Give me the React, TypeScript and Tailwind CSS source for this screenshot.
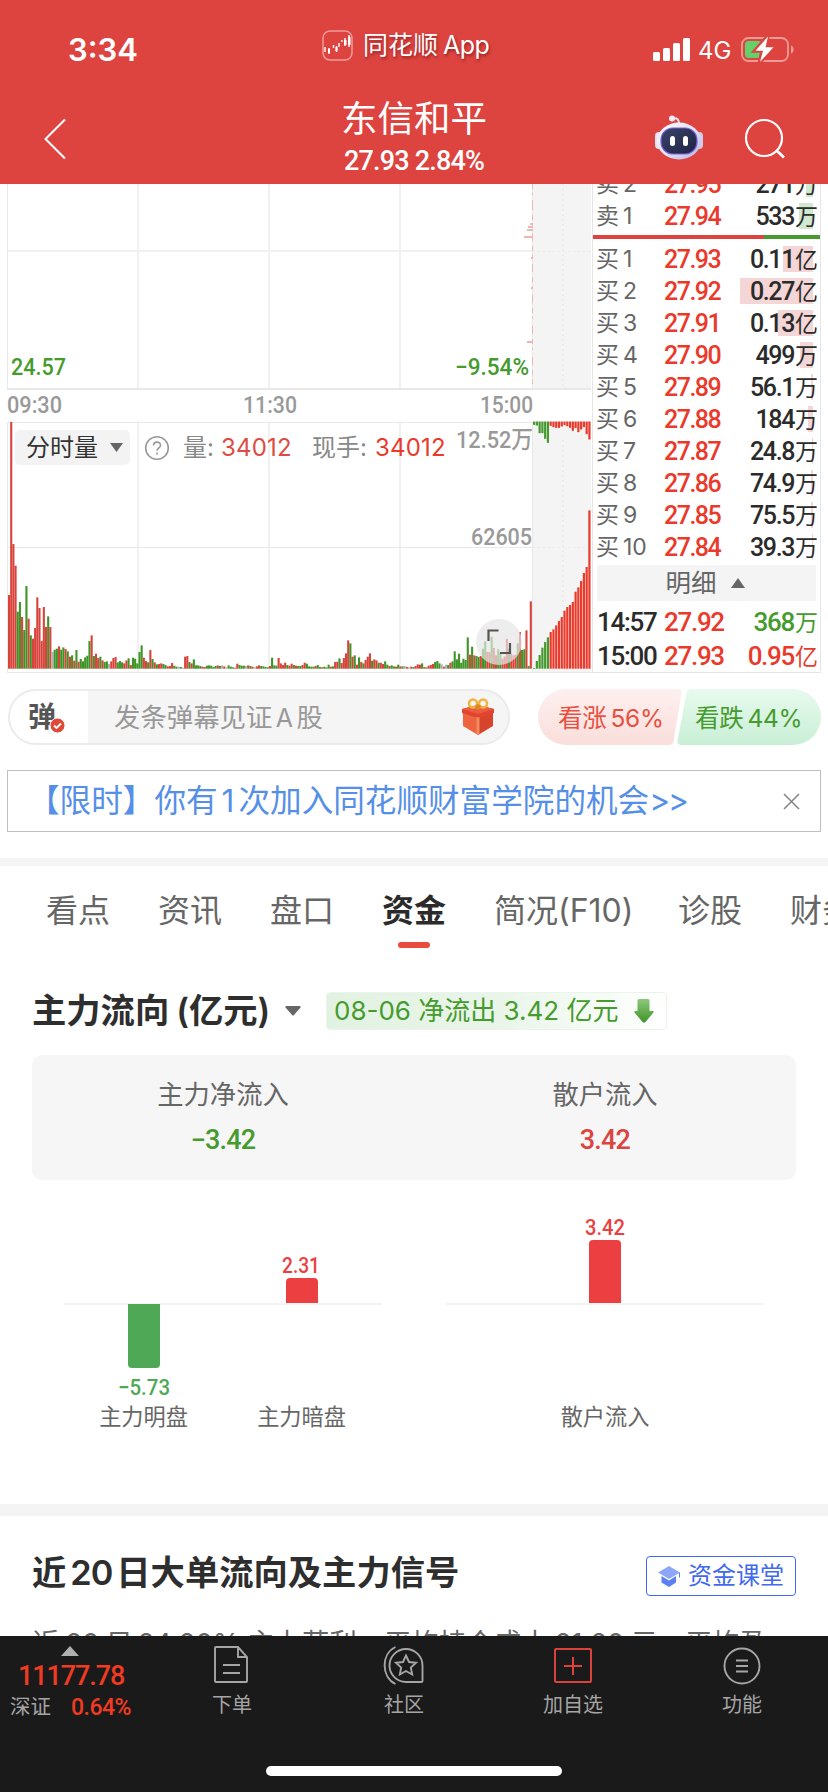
import React from 'react';

const SANS = "[font-family:Inter,'Noto_Sans_CJK_SC',sans-serif]";
const NUM = "[font-family:Roboto,'Noto_Sans_CJK_SC',sans-serif]";

const RED = '#d8443c';
const GREEN = '#3f9428';
const GRAY = '#b0b0b0';

type Level = { label: string; no: string; price: string; amount: string; bar: number };

const asks: Level[] = [
  { label: '卖', no: '2', price: '27.95', amount: '271万', bar: 7 },
  { label: '卖', no: '1', price: '27.94', amount: '533万', bar: 14 },
];

const bids: Level[] = [
  { label: '买', no: '1', price: '27.93', amount: '0.11亿', bar: 30 },
  { label: '买', no: '2', price: '27.92', amount: '0.27亿', bar: 73 },
  { label: '买', no: '3', price: '27.91', amount: '0.13亿', bar: 35 },
  { label: '买', no: '4', price: '27.90', amount: '499万', bar: 13 },
  { label: '买', no: '5', price: '27.89', amount: '56.1万', bar: 2 },
  { label: '买', no: '6', price: '27.88', amount: '184万', bar: 5 },
  { label: '买', no: '7', price: '27.87', amount: '24.8万', bar: 1 },
  { label: '买', no: '8', price: '27.86', amount: '74.9万', bar: 2 },
  { label: '买', no: '9', price: '27.85', amount: '75.5万', bar: 2 },
  { label: '买', no: '10', price: '27.84', amount: '39.3万', bar: 1 },
];

// 分时成交量: 高度 + 颜色 (r 涨 / g 跌 / x 平)
const volume = `221r 740r 374r 309r 171g 200g 155r 116g 248g 150r 100g 90r 122r 214r 182r 83r 185r 125r 157g 125r
51x 57g 60g 67r 57g 64g 59r 52g 36r 40g 24r 56g 21r 29g 22g 34g 39g 83g 100r 38g
45r 32r 36g 25r 20g 22g 14x 22r 32r 35r 19g 23g 19g 16r 25r 31g 11r 33g 30g 16g
50g 70g 33r 23r 19g 56r 29g 19r 13g 14r 16r 14g 11g 7r 8r 17r 9g 6g 6x 5g
3x 36r 38r 20g 16r 28g 10g 10g 8g 6r 5r 9g 10g 9g 5g 8g 10r 8g 10x 7r
4x 10g 6g 4g 3r 15r 11g 9g 9g 8x 10r 8g 6r 4x 7r 10r 8g 7g 5g 4g
8r 33g 10g 9g 32r 16r 11r 18r 11g 9r 15r 11g 9r 8g 8g 11r 18r 15g 7g 6g
6g 8r 11g 5g 4r 6g 4g 12g 6r 7g 20r 21r 31g 17r 32r 46r 85r 76g 36r 40g
12r 34g 20r 16g 26r 36r 46r 24g 28r 25r 18g 18r 14r 22g 12g 8r 10g 7g 6r 12g
7r 7g 8x 5r 4x 6r 5g 8r 13r 12r 16g 5r 4g 9r 11r 14r 20g 23g 16g 13x
6r 12x 11g 18r 22g 52g 28g 45g 18g 30g 26g 94g 42r 66g 40r 38g 35g 38r 60g 82g
50r 50r 96g 62r 40r 58g 50g 30r 36r 90r 60g 45r 40r 42r 76g 110r 56g 58g 115r 8g 202r`
  .trim()
  .split(/\s+/)
  .map((s) => ({ h: parseInt(s, 10) / 3, c: s.endsWith('r') ? RED : s.endsWith('g') ? GREEN : GRAY }));

// 集合竞价
const auctionUp = [2, 23, 41, 63, 80, 94, 110, 118, 130, 143, 155, 174, 185, 191, 200, 231, 244, 263, 287, 305, 475];
const auctionDown = [10, 12, 35, 35, 52, 64, 13, 17, 19, 19, 15, 11, 14, 19, 28, 20, 32, 24, 17, 38, 54];

const ticks = [
  [200, 1], [223, 3], [226, 5], [229, 6], [235.5, 9], [256.5, 2.5], [287, 2], [340.5, 6], [382, 1],
];

const StatusBar = () => (
  <div className={`flex h-[92px] ${SANS} text-white`}>
    <div className="w-[322px] pl-[68px] pt-[34px] text-[31px] font-semibold leading-8">3:34</div>
    <div className="flex h-[30px] w-[331px] items-center mt-[30px]">
      <svg width="31" height="31" viewBox="0 0 31 31" fill="none">
        <rect x="1" y="1" width="29" height="29" rx="7" stroke="#ee9a96" strokeWidth="1.5" />
        <path d="M3 17v5M7 18v6M11.5 15v3M14.5 16v6M17 13v4M20 12v-2M23 8v8M27 5v12" stroke="#fff" strokeWidth="1.4" />
        <path d="M6 19h2v4H6zM13.5 17h2v4h-2zM22 10h2.5v5H22zM26 7h2.5v8H26z" fill="#fff" />
      </svg>
      <span className="ml-[10px] text-[25px] leading-none [text-shadow:1px_2px_3px_rgba(80,0,0,0.5)]">
        同花顺<span className="ml-[5px] text-[25px] tracking-[-0.5px]">App</span>
      </span>
    </div>
    <svg className="mt-[34px]" width="40" height="30" fill="#fff">
      <rect x="0" y="18" width="7" height="9" rx="1.5" />
      <rect x="10" y="14" width="7" height="13" rx="1.5" />
      <rect x="20" y="9" width="7" height="18" rx="1.5" />
      <rect x="30" y="4" width="7" height="23" rx="1.5" />
    </svg>
    <div className="mt-[39px] ml-[5px] w-[43px] text-[24px] leading-6">4G</div>
    <svg className="mt-[34px]" width="56" height="32" viewBox="0 0 56 32" fill="none">
      <rect x="1" y="4" width="46" height="23" rx="6.5" stroke="#ee9a96" strokeWidth="1.8" />
      <path d="M50 11.500c3.500 1 3.500 7 0 8z" fill="#ee9a96" />
      <rect x="4" y="7" width="17" height="17" rx="3.500" fill="#65cf6b" />
      <path d="M27 2 13.500 17h7.500l-2.500 11.500L33 13h-8.500z" fill="#fff" stroke="#dd4440" strokeWidth="3.500" />
      <path d="M27 2.500 14.500 16.800h7.500L19 28 32.500 13.200h-8z" fill="#fff" />
    </svg>
  </div>
);

const Robot = () => (
  <svg width="50" height="48" viewBox="0 0 50 48">
    <defs>
      <linearGradient id="shell" x1="0" y1="0" x2="1" y2="1">
        <stop offset="0" stopColor="#ffffff" />
        <stop offset="0.6" stopColor="#dcdcf0" />
        <stop offset="1" stopColor="#b4b2dc" />
      </linearGradient>
      <linearGradient id="visor" x1="0" y1="0" x2="1" y2="1">
        <stop offset="0" stopColor="#3a4468" />
        <stop offset="1" stopColor="#1d2344" />
      </linearGradient>
    </defs>
    <path d="M19 4.500c4-1 6 1 6 5" fill="none" stroke="#e4e2f2" strokeWidth="2" />
    <circle cx="18" cy="4.500" r="3" fill="#efeef8" />
    <rect x="1" y="18" width="8" height="17" rx="4" fill="#e4e2f4" />
    <rect x="41" y="18" width="8" height="17" rx="4" fill="#cfcdea" />
    <ellipse cx="25" cy="27" rx="22" ry="18.500" fill="url(#shell)" />
    <rect x="7" y="14" width="36" height="26" rx="12" fill="url(#visor)" stroke="#7a5fe0" strokeWidth="1.200" />
    <rect x="16" y="22" width="5" height="10" rx="2.500" fill="#fff" />
    <rect x="29" y="22" width="5" height="10" rx="2.500" fill="#fff" />
  </svg>
);

const Header = () => (
  <header className="h-[184px] shrink-0 bg-[#dd4440] text-white">
    <StatusBar />
    <div className="flex h-[92px]">
      <div className="w-[300px] pt-[26px] pl-[43px]">
        <svg width="26" height="42" viewBox="0 0 26 42" fill="none" stroke="#fff" strokeWidth="2">
          <path d="M22 1.500 2.500 21 22 40.500" />
        </svg>
      </div>
      <div className="flex w-[228px] flex-col items-center">
        <div className={`${SANS} mt-[9px] text-[36.5px] leading-[36px]`}>东信和平</div>
        <div className={`${NUM} mt-[10px] text-[27px] font-medium leading-[28px] tracking-[-0.8px]`}>27.93 2.84%</div>
      </div>
      <div className="flex pl-[126px] pt-[22px]">
        <Robot />
        <svg className="ml-[40px]" width="44" height="46" viewBox="0 0 44 46" fill="none" stroke="#fff" strokeWidth="2.200">
          <circle cx="20" cy="24" r="18" />
          <path d="m32 36 8 7.500" strokeWidth="2.800" />
        </svg>
      </div>
    </div>
  </header>
);

const AxisText = ({ x, y, w, fill, children, size = 24, weight = 500 }: any) => (
  <text x={x} y={y} textLength={w} lengthAdjust="spacingAndGlyphs" fill={fill} fontSize={size} fontWeight={weight}
    fontFamily="Roboto, 'Noto Sans CJK SC', sans-serif">
    {children}
  </text>
);

const TimeChart = () => (
  <div className="relative h-[489px] w-[592px]">
    <svg width="592" height="489" viewBox="0 184 592 489" shapeRendering="crispEdges">
      <rect x="533" y="184" width="58" height="204" fill="#f4f4f4" />
      <rect x="533" y="422" width="58" height="250" fill="#f4f4f4" />
      <g fill="#f1f1f1">
        {[137, 268, 399].map((x) => (
          <React.Fragment key={x}>
            <rect x={x} y="184" width="2" height="205" />
            <rect x={x} y="423" width="2" height="249" />
          </React.Fragment>
        ))}
        <rect x="7" y="250" width="525" height="2" />
      </g>
      <g fill="#e8e8e8">
        <rect x="7" y="184" width="1" height="206" />
        <rect x="7" y="422" width="1" height="250" />
        <rect x="7" y="388" width="584" height="2" />
        <rect x="7" y="422" width="584" height="1" />
        <rect x="7" y="547" width="525" height="1" />
        <rect x="532" y="184" width="1" height="205" />
        <rect x="532" y="422" width="1" height="250" />
        <rect x="7" y="672" width="585" height="1" />
      </g>
      <g stroke="#ececec" strokeWidth="1.500" strokeDasharray="2 3">
        <path d="M563 184v204M533 251.500h58M563 440v230M533 547.500h58" />
      </g>
      <path d="M532.500 184v204" stroke="#f0b6b4" strokeDasharray="5 4 2 7 8 5" />
      {ticks.map(([y, w]) => (
        <rect key={y} x={533 - w} y={y} width={w} height="2" fill="#f1b5b3" />
      ))}
      <g shapeRendering="auto">
        {volume.map((v, i) => (
          <rect key={i} x={8 + i * 2.174} y={668.7 - v.h} width="2.100" height={v.h} fill={v.c} />
        ))}
        {auctionUp.map((h, i) => (
          <g key={i} fill={i < 6 ? '#45992f' : '#ea3a2c'}>
            <rect x={533 + i * 2.766} y={668.7 - h / 3} width="2.200" height={h / 3} />
            <rect x={533 + i * 2.766} y="421.500" width="2.200" height={auctionDown[i] / 3} />
          </g>
        ))}
      </g>
      <AxisText x="11" y="375" w="55" fill="#459b2d">24.57</AxisText>
      <AxisText x="455" y="375" w="74" fill="#459b2d">−9.54%</AxisText>
      <AxisText x="7" y="413" w="55" fill="#999">09:30</AxisText>
      <AxisText x="243" y="413" w="54" fill="#999">11:30</AxisText>
      <AxisText x="480" y="413" w="53" fill="#999">15:00</AxisText>
      <AxisText x="456" y="448" w="77" fill="#999">12.52万</AxisText>
      <AxisText x="471" y="545" w="61" fill="#999">62605</AxisText>
      <g shapeRendering="auto">
        <circle cx="499" cy="642" r="23" fill="#e6e6e6" fillOpacity="0.700" />
        <path d="M488.500 641v-10.500h10M510 643v10h-10" fill="none" stroke="#555" strokeWidth="2.200" />
      </g>
    </svg>
    <div className={`absolute left-[15px] top-[246px] flex items-center ${SANS} text-[24px] leading-none text-[#888]`}>
      <div className="flex h-[35px] w-[115px] items-center rounded-[5px] bg-[#f3f3f3] pl-[11px] text-[#333]">
        分时量
        <svg className="ml-[12px]" width="13" height="9"><path d="M0 0h13L6.500 9z" fill="#666" /></svg>
      </div>
      <svg className="ml-[14px]" width="26" height="26" viewBox="0 0 26 26" fill="none" stroke="#999" strokeWidth="1.600">
        <circle cx="13" cy="13" r="11.300" />
        <path d="M9.500 10.500c0-4.500 7-4.500 7-.3 0 2.700-3.500 2.500-3.500 5.600M13 17.500v2" />
      </svg>
      <span className="ml-[13px] w-[38px] whitespace-nowrap">量:</span>
      <span className="w-[91px] tracking-[0.2px] text-[#dd4b44]">34012</span>
      <span className="w-[63px] whitespace-nowrap">现手:</span>
      <span className="tracking-[0.2px] text-[#ea3a2c]">34012</span>
    </div>
  </div>
);

const LevelRow = ({ row, ask }: { row: Level; ask?: boolean }) => (
  <div className="relative flex h-8 items-center pl-[3px] leading-none">
    <span className={`absolute right-[7px] top-[3px] h-[26px] ${ask ? 'bg-[#cfe8cf]' : 'bg-[#f5d6d6]'}`} style={{ width: row.bar }} />
    <span className={`${SANS} flex w-[68px] text-[23px] text-[#666]`}>
      {row.label}
      <span className="ml-[4px] text-[23px]">{row.no}</span>
    </span>
    <span className={`${NUM} text-[25px] font-medium tracking-[-1.5px] text-[#ea3a2c]`}>{row.price}</span>
    <span className={`${NUM} relative ml-auto mr-[2px] text-[25px] font-medium tracking-[-1.400px] text-[#2b2b2b]`}>
      {row.amount.slice(0, -1)}
      <span className="ml-px text-[23px] font-normal tracking-normal">{row.amount.slice(-1)}</span>
    </span>
  </div>
);

const OrderBook = () => (
  <div className="h-[489px] w-[229px] overflow-hidden border-r border-b border-l border-[#e5e5e5]">
    <div className="-mt-4">
      {asks.map((r) => <LevelRow key={r.no} row={r} ask />)}
    </div>
    <div className="mt-[3px] mb-1 flex h-1">
      <div className="w-[171px] bg-[#dd4440]" />
      <div className="flex-1 bg-[#459b2d]" />
    </div>
    {bids.map((r) => <LevelRow key={r.no} row={r} />)}
    <div className={`${SANS} mx-1 mt-[2px] flex h-9 items-center justify-center bg-[#f4f4f4] text-[25.5px] leading-none text-[#666]`}>
      明细
      <svg className="ml-[14px] mr-[3px]" width="14" height="10"><path d="M0 10h14L7 0z" fill="#666" /></svg>
    </div>
    {[
      { time: '14:57', price: '27.92', n: '368', u: '万', c: 'text-[#459b2d]' },
      { time: '15:00', price: '27.93', n: '0.95', u: '亿', c: 'text-[#ea3a2c]' },
    ].map((t, i) => (
      <div key={i} className={`${NUM} flex h-[34px] items-center pl-[4px] text-[26px] font-medium leading-none tracking-[-1.300px] ${i === 0 ? 'mt-[4px]' : ''}`}>
        <span className="w-[67px] text-[#2b2b2b]">{t.time}</span>
        <span className="text-[#ea3a2c]">{t.price}</span>
        <span className={`ml-auto mr-[2px] ${t.c}`}>
          {t.n}<span className="ml-px text-[23px] font-normal tracking-normal">{t.u}</span>
        </span>
      </div>
    ))}
  </div>
);

const Gift = () => (
  <svg width="34" height="38" viewBox="0 0 34 38">
    <path d="M2 12v16l15 9V16z" fill="#ee6440" />
    <path d="M32 12v16L17 37V16z" fill="#d8432c" />
    <path d="M1 11 17 7l16 4v4l-16 5L1 15z" fill="#e2452f" />
    <path d="M1 11 17 7l16 4-16 5z" fill="#ea5c40" />
    <path d="m15.500 19 1.500.5 1.500-.5v17l-1.500 1-1.500-1z" fill="#f08b5a" />
    <g fill="none" stroke="#f2b23e" strokeWidth="2.500">
      <circle cx="12" cy="5.500" r="4" />
      <circle cx="22" cy="5.500" r="4" />
    </g>
    <circle cx="17" cy="9" r="2.800" fill="#d98a28" />
  </svg>
);

const DanmakuBar = () => (
  <div className={`${SANS} mt-[16px] flex h-14 pl-2 leading-none`}>
    <div className="flex h-14 w-[502px] items-center overflow-hidden rounded-full border-2 border-[#ebebeb] bg-[#f5f5f5]">
      <div className="relative flex h-full w-[78px] items-center bg-white pl-[18px] text-[28px] font-bold text-[#555]">
        弹
        <svg className="absolute left-[39px] top-[26px]" width="17" height="17" viewBox="0 0 17 17">
          <circle cx="8.500" cy="8.500" r="7.500" fill="#e04a38" stroke="#fff" strokeWidth="1" />
          <path d="m5 8.500 2.500 2.500L12 6.500" fill="none" stroke="#fff" strokeWidth="1.800" />
        </svg>
      </div>
      <span className="ml-[26px] text-[26.400px] text-[#999]">发条弹幕见证<span className="mx-[3.500px] text-[25px]">A</span>股</span>
      <div className="mr-[13px] ml-auto"><Gift /></div>
    </div>
    <div className="relative ml-[28px] h-14 w-[283px]">
      <svg width="283" height="56" viewBox="0 0 283 56">
        <defs>
          <linearGradient id="bull" x1="0" y1="0" x2="0" y2="1">
            <stop offset="0" stopColor="#fdf0ef" />
            <stop offset="1" stopColor="#fadedb" />
          </linearGradient>
          <linearGradient id="bear" x1="0" y1="0" x2="0" y2="1">
            <stop offset="0" stopColor="#e8faee" />
            <stop offset="1" stopColor="#c8efd5" />
          </linearGradient>
        </defs>
        <path d="M28 0h112q4 0 3.500 4l-8 48q-.5 4-4.500 4H28a28 28 0 0 1 0-56z" fill="url(#bull)" />
        <path d="M255 0H153q-4 0-4.500 4l-9 48q-.5 4 3.500 4h112a28 28 0 0 0 0-56z" fill="url(#bear)" />
      </svg>
      <div className="absolute inset-0 flex items-center pt-[2px] text-[24.500px] tracking-[-0.3px]">
        <span className="w-[137px] pl-[20px] text-[#e8503f]">看涨<span className="ml-[4px]">56%</span></span>
        <span className="pl-[20px] text-[#459b2d]">看跌<span className="ml-[4px]">44%</span></span>
      </div>
    </div>
  </div>
);

const Banner = () => (
  <div className={`${SANS} mx-[7px] mt-[25px] flex h-[62px] items-center border-[1.5px] border-[#bfbfbf] leading-none`}>
    <span className="ml-[20px] whitespace-nowrap text-[31.6px] text-[#568fe8]">
      【限时】你有<span className="mx-[4px]">1</span>次加入同花顺财富学院的机会<span className="tracking-[-2px]">&gt;&gt;</span>
    </span>
    <svg className="mr-[20px] ml-auto" width="17" height="17" fill="none" stroke="#888" strokeWidth="1.600">
      <path d="m1 1 15 15M16 1 1 16" />
    </svg>
  </div>
);

const tabs = [
  { name: '看点', w: 'w-[112px]' },
  { name: '资讯', w: 'w-[112px]' },
  { name: '盘口', w: 'w-[112px]' },
  { name: '资金', w: 'w-[112px]', active: true },
  { name: '简况(F10)', w: 'w-[184px]' },
  { name: '诊股', w: 'w-[112px]' },
  { name: '财务', w: 'w-[112px]' },
];

const Tabs = () => (
  <nav className={`${SANS} flex h-[104px] overflow-hidden pl-[46px] text-[32px] leading-none text-[#666]`}>
    {tabs.map((t) => (
      <div key={t.name} className={`${t.w} shrink-0 pt-[29px]`}>
        <div className={t.active ? 'inline-flex flex-col items-center font-bold text-[#2b2b2b]' : 'inline-block'}>
          {t.name}
          {t.active && <span className="mt-[15px] h-[6px] w-8 rounded-full bg-[#e84c3d]" />}
        </div>
      </div>
    ))}
  </nav>
);

const FundFlow = () => (
  <section className={`${SANS} h-[534px] overflow-hidden px-8 pt-[22px] leading-none`}>
    <div className="flex h-[38px] items-center">
      <h2 className="w-[238px] whitespace-nowrap text-[34.300px] font-bold text-[#2e2e2e]">
        主力流向<span className="ml-[7px] font-semibold">(</span>亿元<span className="font-semibold">)</span>
      </h2>
      <svg className="ml-[15px]" width="16" height="10"><path d="M1 0h14q1 .5.500 1.500L8.500 9.500h-1L.5 1.500Q0 .5 1 0z" fill="#666" /></svg>
      <div className="ml-[25px] flex h-[38px] w-[341px] items-center whitespace-nowrap rounded-[4px] border border-[#eaf5ea] bg-linear-to-r from-[#e2f2e2] via-[#e9f5e9] to-white pl-[7px] text-[26px] text-[#459b2d]">
        <span className="text-[26px]">08-06 净流出 3.42 亿元</span>
        <svg className="mr-[12px] ml-auto" width="20" height="24" viewBox="0 0 20 24">
          <defs>
            <linearGradient id="down" x1="0" y1="0" x2="0" y2="1">
              <stop offset="0" stopColor="#8cc97c" />
              <stop offset="1" stopColor="#3f9428" />
            </linearGradient>
          </defs>
          <path d="M5 0h9q1.500 0 1.500 1.500V12H19q1 .5.500 1.500l-8.500 10h-2l-8.500-10Q0 12.500 1 12h2.500V1.500Q3.500 0 5 0z" fill="url(#down)" />
        </svg>
      </div>
    </div>
    <div className="mt-[25px] grid h-[125px] grid-cols-2 rounded-[10px] bg-[#f6f6f6] text-center">
      <div className="pt-[27px]">
        <div className="text-[26.300px]/[26px] text-[#666]">主力净流入</div>
        <div className={`${NUM} mt-[19px] text-[27px] font-medium tracking-[-0.8px] text-[#459b2d]`}>−3.42</div>
      </div>
      <div className="pt-[27px]">
        <div className="text-[26.300px]/[26px] text-[#666]">散户流入</div>
        <div className={`${NUM} mt-[19px] text-[27px] font-medium tracking-[-0.8px] text-[#dd4440]`}>3.42</div>
      </div>
    </div>
    <svg className="-mx-8 max-w-none" width="828" height="300" viewBox="0 1180 828 300">
      <rect x="64" y="1303" width="318" height="2" fill="#f3f3f3" />
      <rect x="446" y="1303" width="318" height="2" fill="#f3f3f3" />
      <path d="M128 1304h32v60q0 4-4 4h-24q-4 0-4-4z" fill="#4ea855" />
      <path d="M286 1303v-21q0-4 4-4h24q4 0 4 4v21z" fill="#ec3f42" />
      <path d="M589 1303v-59q0-4 4-4h24q4 0 4 4v59z" fill="#ec3f42" />
      <AxisText x="118" y="1395" w="52" size={22} fill="#4ea855">−5.73</AxisText>
      <AxisText x="282" y="1273" w="38" size={22} fill="#ec3f42">2.31</AxisText>
      <AxisText x="585" y="1235" w="40" size={22} fill="#ec3f42">3.42</AxisText>
      <g fontFamily="'Noto Sans CJK SC', sans-serif" fontSize="22.2" fill="#666" textAnchor="middle">
        <text x="143.500" y="1425">主力明盘</text>
        <text x="301.500" y="1425">主力暗盘</text>
        <text x="605" y="1425">散户流入</text>
      </g>
    </svg>
  </section>
);

const BigOrders = () => (
  <section className={`${SANS} h-[120px] overflow-hidden px-8 pt-10 leading-none`}>
    <div className="flex h-10 justify-between">
      <h2 className="whitespace-nowrap text-[34.300px]/[34px] font-bold text-[#2e2e2e]">
        近<span className="mx-[4px] font-semibold tracking-[-1px]">20</span>日大单流向及主力信号
      </h2>
      <button className="flex h-10 w-[150px] items-center rounded-[4px] border-[1.5px] border-[#4169f0] pl-[11px] text-[24px] text-[#4169f0]">
        <svg className="mr-[8px]" width="22" height="21" viewBox="0 0 22 21">
          <path d="M11 0 22 6.500 11 13 0 6.500z" fill="#8da6f7" />
          <path d="M3.500 10v6.500L11 21l7-4.500V10L11 14.500z" fill="#5c80f3" />
          <path d="M21.500 6.500v5" stroke="#5c80f3" />
        </svg>
        <span className="whitespace-nowrap">资金课堂</span>
      </button>
    </div>
    <p className="mt-[34px] whitespace-nowrap text-[27.400px] text-[#666]">
      近<span className="mx-[6px]">20</span>日<span className="ml-[5px]">24.20%</span> 主力获利，平均持仓成本<span className="mx-[6px]">21.20</span>元，平均盈
    </p>
  </section>
);

const NavItem = ({ label, className, children }: any) => (
  <div className={`flex w-[80px] flex-col items-center pt-[9px] ${className}`}>
    <svg width="44" height="42" viewBox="0 0 44 42" fill="none" stroke="#a5a5a5" strokeWidth="1.900">{children}</svg>
    <span className="mt-[7px] whitespace-nowrap text-[20px]/[22px]">{label}</span>
  </div>
);

const BottomNav = () => (
  <footer className={`${SANS} relative flex h-[156px] shrink-0 bg-[#1a1a1a] leading-none text-[#a5a5a5]`}>
    <div className="w-[192px] pt-[10px]">
      <svg className="ml-[61px]" width="18" height="10"><path d="M0 10h18L9 0z" fill="#b0b0b0" /></svg>
      <div className={`${NUM} mt-[7px] ml-[18px] text-[27px] font-medium tracking-[-1.100px] text-[#f03a22]`}>11177.78</div>
      <div className="mt-[6px] ml-[10px] flex items-center text-[20.500px]">
        深证
        <span className={`${NUM} ml-[20px] text-[23px] font-medium tracking-[-0.5px] text-[#f03a22]`}>0.64%</span>
      </div>
    </div>
    <NavItem label="下单" className="">
      <path d="M5 3q0-1 1-1h22l9 10v24q0 1-1 1H6q-1 0-1-1zM28 2v10h9M13 20h17M13 28h17" />
    </NavItem>
    <NavItem label="社区" className="ml-[92px]">
      <path d="M24 4a16.500 16.500 0 0 1 16.500 16.500V36q0 1-1 1H24A16.500 16.500 0 0 1 24 4zM13.500 2C-1 9-1 32 13.500 39" />
      <path d="m24 10.500 3 6.500 7 .8-5.200 4.700 1.400 7-6.200-3.500-6.200 3.500 1.400-7L14 17.800l7-.8z" />
    </NavItem>
    <NavItem label="加自选" className="ml-[89px]">
      <g stroke="#d8443c" strokeWidth="2">
        <rect x="4" y="4" width="36" height="33" rx="1" />
        <path d="M22 12v18M13 21h18" />
      </g>
    </NavItem>
    <NavItem label="功能" className="ml-[89px]">
      <circle cx="22" cy="21" r="17.500" />
      <path d="M16 15.500h12M16 21h12M16 26.500h12" />
    </NavItem>
    <div className="absolute bottom-4 left-[266px] h-[10px] w-[296px] rounded-full bg-white" />
  </footer>
);

export default function App() {
  return (
    <div className="flex h-[1792px] w-[828px] flex-col overflow-hidden bg-white">
      <Header />
      <main className="h-[1452px] overflow-hidden">
        <div className="flex">
          <TimeChart />
          <OrderBook />
        </div>
        <DanmakuBar />
        <Banner />
        <div className="mt-[26px] h-2 bg-[#f4f4f4]" />
        <Tabs />
        <FundFlow />
        <div className="h-3 bg-[#f4f4f4]" />
        <BigOrders />
      </main>
      <BottomNav />
    </div>
  );
}
